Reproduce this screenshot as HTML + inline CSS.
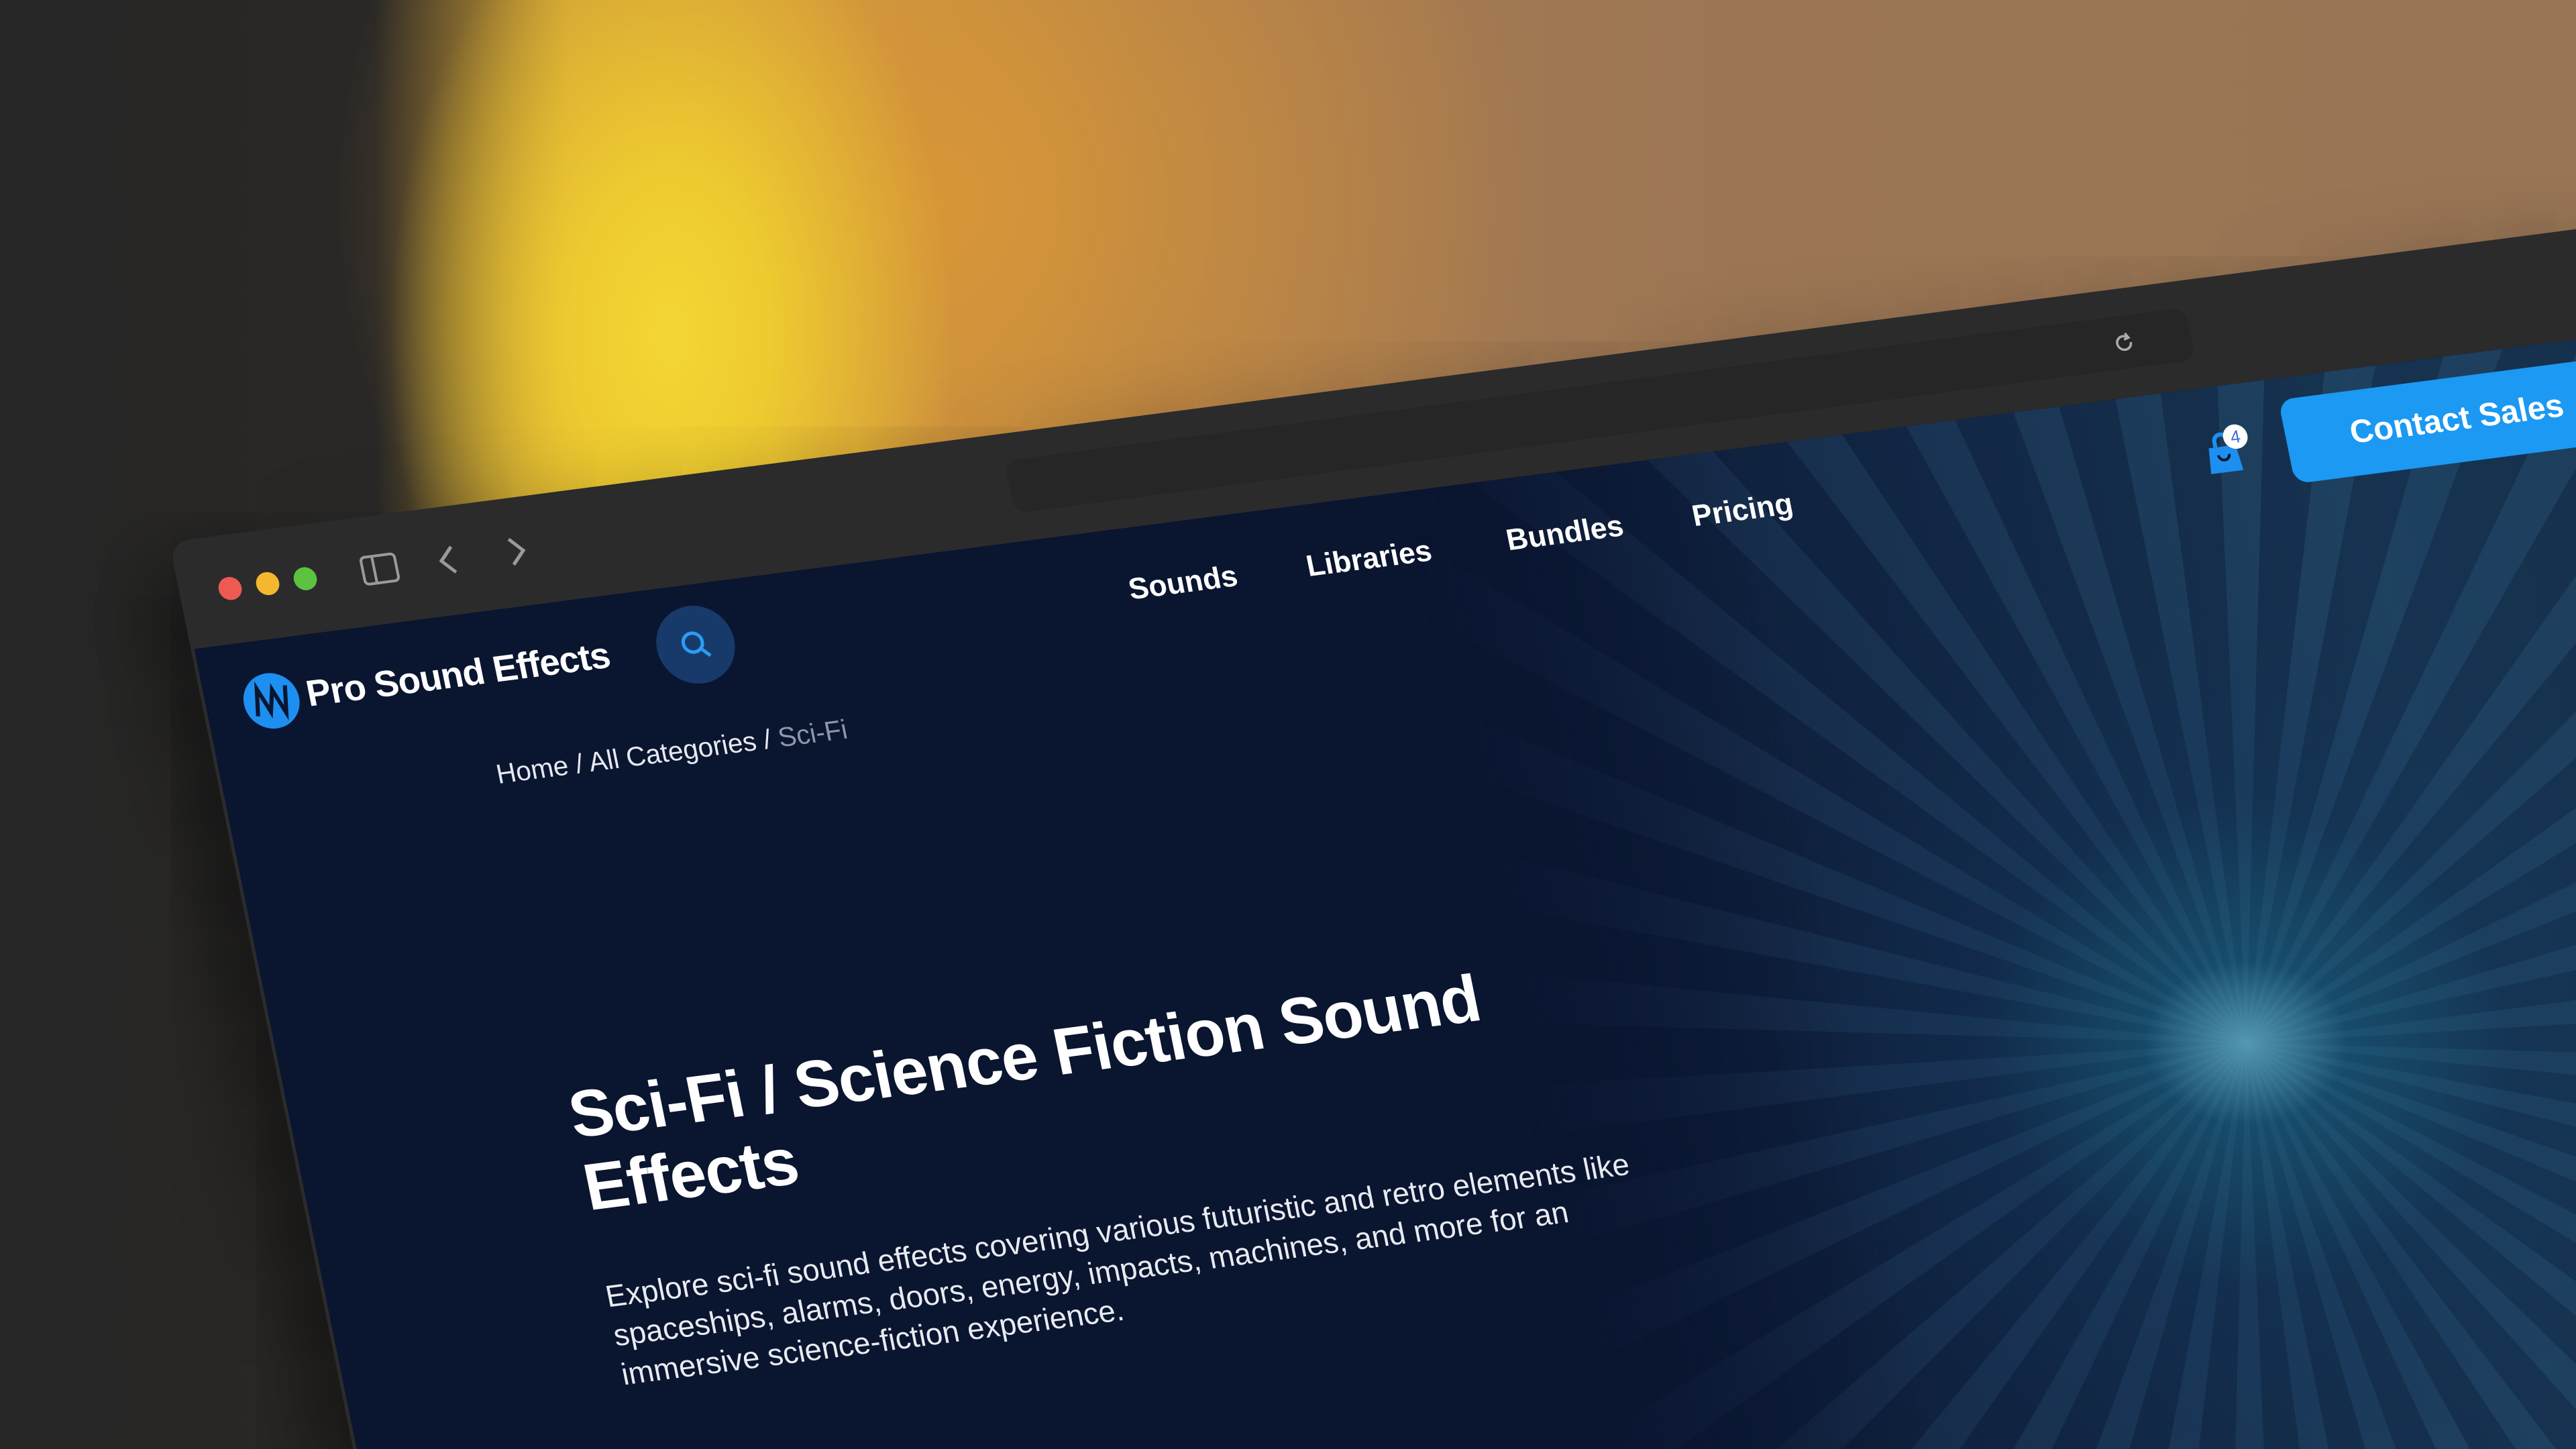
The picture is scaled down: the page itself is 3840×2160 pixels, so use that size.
<!DOCTYPE html>
<html><head><meta charset="utf-8"><style>
html,body{margin:0;padding:0;width:3840px;height:2160px;overflow:hidden;background:#262626;font-family:"Liberation Sans",sans-serif}
#stage{position:absolute;left:0;top:0;width:3840px;height:2160px;overflow:hidden}
#bg{position:absolute;left:0;top:0;width:3840px;height:2160px;
background:
radial-gradient(ellipse 420px 700px at 1000px 500px,#f3d634 0%,#eecb30 35%,rgba(230,170,50,0) 100%),
radial-gradient(ellipse 900px 900px at 1400px 300px,rgba(215,150,55,1) 0%,rgba(200,140,70,0) 100%),
linear-gradient(90deg,#262626 0px,#2a2826 560px,#c9a035 850px,#cf9a40 1200px,#a87a50 1700px,#9c7654 2600px,#987555 3840px)}
#win{position:absolute;left:0;top:0;width:4200px;height:2400px;transform-origin:0 0;
transform:matrix(1,-0.13,0.203,1,252,808);background:#2b2b2c;border-radius:30px;box-shadow:-40px 40px 120px rgba(0,0,0,.6)}
.dot{position:absolute;top:62px;width:34px;height:34px;border-radius:50%}
#content{position:absolute;left:5px;top:160px;width:4195px;height:2240px;overflow:hidden;background:#0a1530}
#tun{position:absolute;left:1800px;top:0;width:2400px;height:2240px;
background:
radial-gradient(ellipse 150px 120px at 1064px 960px,rgba(130,200,225,.55),rgba(40,110,150,0) 100%),
radial-gradient(ellipse 700px 650px at 1064px 960px,rgba(30,120,150,.6),rgba(20,60,100,.25) 55%,rgba(11,22,48,0) 100%),
repeating-conic-gradient(from 0deg at 1064px 960px,rgba(90,140,180,.09) 0deg 4deg,rgba(10,25,50,.2) 4deg 9deg),
linear-gradient(90deg,rgba(10,21,48,1) 0px,rgba(18,40,70,.95) 600px,rgba(26,60,90,.95) 1400px,rgba(22,50,80,1) 2400px);
-webkit-mask-image:linear-gradient(90deg,transparent 0,#000 500px);mask-image:linear-gradient(90deg,transparent 0,#000 500px)}
.t{position:absolute;color:#fff;white-space:nowrap}
.nav{font-size:44px;font-weight:bold;top:66px}
</style></head><body><div id="stage">
<div id="bg"></div>
<div id="win">
 <div class="dot" style="left:58px;background:#ee5a52"></div>
 <div class="dot" style="left:114px;background:#f4b82e"></div>
 <div class="dot" style="left:170px;background:#5cc23f"></div>
 <svg style="position:absolute;left:270px;top:56px" width="56" height="46" viewBox="0 0 56 46"><rect x="3" y="3" width="50" height="40" rx="6" fill="none" stroke="#9a9a9a" stroke-width="4"/><line x1="20" y1="3" x2="20" y2="43" stroke="#9a9a9a" stroke-width="4"/></svg>
 <svg style="position:absolute;left:384px;top:56px" width="30" height="46"><path d="M24 4 L6 23 L24 42" fill="none" stroke="#9a9a9a" stroke-width="5"/></svg>
 <svg style="position:absolute;left:488px;top:56px" width="30" height="46"><path d="M6 4 L24 23 L6 42" fill="none" stroke="#9a9a9a" stroke-width="5"/></svg>
 <div style="position:absolute;left:1237px;top:40px;width:1760px;height:78px;border-radius:20px;background:#262627"></div>
 <svg style="position:absolute;left:2880px;top:62px" width="36" height="36" viewBox="0 0 36 36"><path d="M28 18a10 10 0 1 1-4-8" fill="none" stroke="#aaa" stroke-width="3.5"/><path d="M22 4l4 7-7 2" fill="none" stroke="#aaa" stroke-width="3.5"/></svg>
 <div id="content">
  <div id="tun"></div>
  <svg style="position:absolute;left:55px;top:48px" width="84" height="84" viewBox="0 0 84 84"><circle cx="42" cy="42" r="41" fill="#1d8ff0"/><path d="M18 62 L24 22 L38 58 L46 26 L60 62 L66 22" fill="none" stroke="#0a1530" stroke-width="6"/></svg>
  <div class="t" style="left:150px;top:56px;font-size:54px;font-weight:bold;letter-spacing:-1px">Pro Sound Effects</div>
  <div style="position:absolute;left:672px;top:31px;width:115px;height:115px;border-radius:50%;background:#173a6b"></div>
  <svg style="position:absolute;left:705px;top:64px" width="50" height="50" viewBox="0 0 50 50"><circle cx="21" cy="21" r="14" fill="none" stroke="#2a9cf5" stroke-width="5"/><line x1="31" y1="31" x2="43" y2="43" stroke="#2a9cf5" stroke-width="5"/></svg>
  <div class="t nav" style="left:1375px">Sounds</div>
  <div class="t nav" style="left:1640px">Libraries</div>
  <div class="t nav" style="left:1938px">Bundles</div>
  <div class="t nav" style="left:2215px">Pricing</div>
  <svg style="position:absolute;left:2975px;top:55px" width="80" height="80" viewBox="0 0 80 80"><path d="M10 34h40l4 38H6z" fill="#1d8ff0"/><path d="M20 34v-8a10 10 0 0 1 20 0v8" fill="none" stroke="#1d8ff0" stroke-width="6"/><path d="M22 46a8 8 0 0 0 16 0" fill="none" stroke="#0a1530" stroke-width="4"/><circle cx="52" cy="22" r="18" fill="#fff"/><text x="52" y="31" font-size="26" text-anchor="middle" fill="#3a6fd8" font-family="Liberation Sans">4</text></svg>
  <div style="position:absolute;left:3100px;top:32px;width:640px;height:125px;border-radius:22px;background:#1b99f3"></div>
  <div class="t" style="left:3195px;top:66px;font-size:48px;font-weight:bold">Contact Sales</div>
  <div class="t" style="left:402px;top:218px;font-size:40px;color:#e6e9ef">Home / All Categories / <span style="color:#8d96a8">Sci-Fi</span></div>
  <div class="t" style="left:408px;top:695px;font-size:97px;font-weight:bold;line-height:108px;letter-spacing:-1px">Sci-Fi / Science Fiction Sound<br>Effects</div>
  <div class="t" style="left:407px;top:990px;font-size:45px;line-height:58px;color:#e8ebf0">Explore sci-fi sound effects covering various futuristic and retro elements like<br>spaceships, alarms, doors, energy, impacts, machines, and more for an<br>immersive science-fiction experience.</div>
 </div>
</div>
</div></body></html>
